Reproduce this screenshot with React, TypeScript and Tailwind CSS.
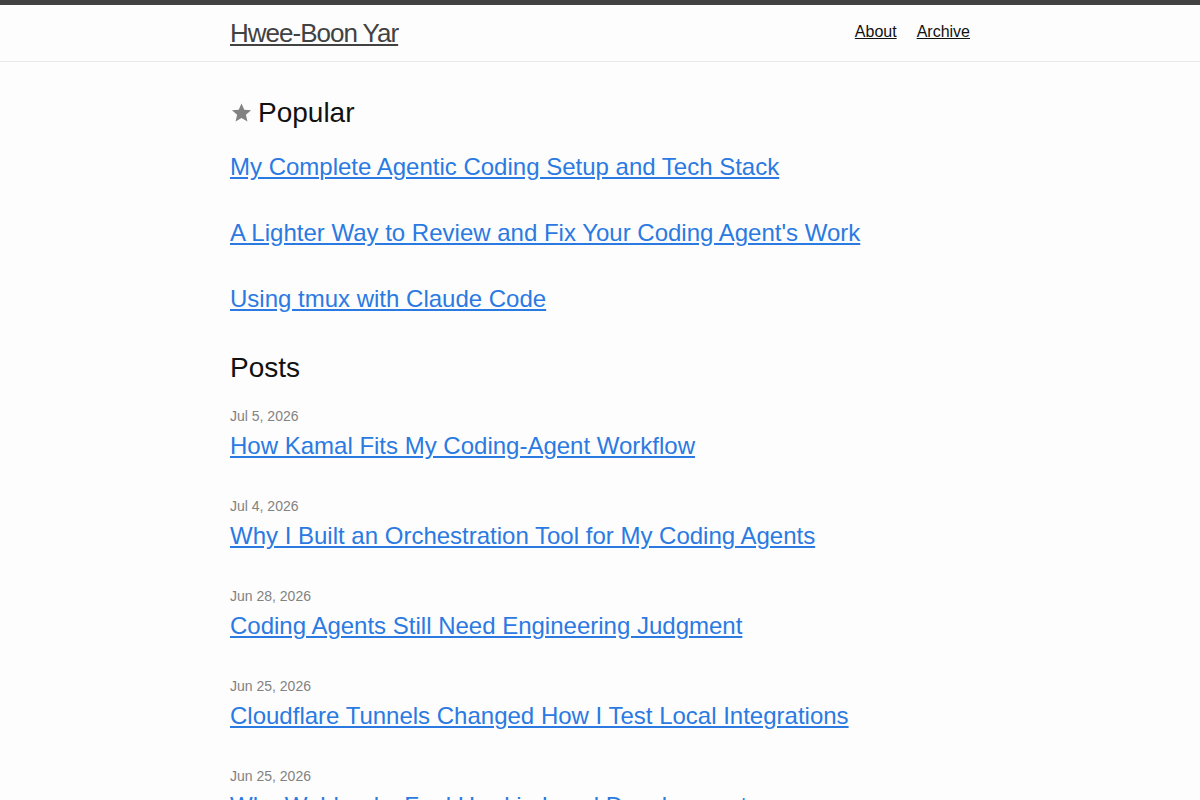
import React from "react"

const popular = [
  "My Complete Agentic Coding Setup and Tech Stack",
  "A Lighter Way to Review and Fix Your Coding Agent's Work",
  "Using tmux with Claude Code",
]

const posts = [
  { date: "Jul 5, 2026", title: "How Kamal Fits My Coding-Agent Workflow" },
  { date: "Jul 4, 2026", title: "Why I Built an Orchestration Tool for My Coding Agents" },
  { date: "Jun 28, 2026", title: "Coding Agents Still Need Engineering Judgment" },
  { date: "Jun 25, 2026", title: "Cloudflare Tunnels Changed How I Test Local Integrations" },
  { date: "Jun 25, 2026", title: "Why Webhooks Feel Hard in Local Development" },
]

function Star() {
  return (
    <svg viewBox="0 0 24 24" className="inline-block w-[23px] h-[23px] mr-[5px] align-[-2px]" fill="#828282">
      <path d="M12 2.5l2.9 6.6 7.1.6-5.4 4.7 1.6 7-6.2-3.7-6.2 3.7 1.6-7L2 9.7l7.1-.6z" />
    </svg>
  )
}

export default function App() {
  return (
    <div className="min-h-screen bg-[#fdfdfd] text-[#111] text-base leading-normal font-['Liberation_Sans',Arial,sans-serif]">
      {/* Header */}
      <header className="border-t-[5px] border-t-[#424242] border-b border-b-[#e8e8e8] min-h-[56px]">
        <div className="max-w-[800px] mx-auto px-[30px] flex items-center justify-between">
          <a href="#" className="text-[26px] leading-[56px] tracking-[-1px] font-light text-[#424242] underline">
            Hwee-Boon Yar
          </a>
          <nav className="flex gap-5 leading-[56px] -mt-[3px]">
            <a href="#" className="text-[#111] underline">About</a>
            <a href="#" className="text-[#111] underline">Archive</a>
          </nav>
        </div>
      </header>

      <main className="py-[30px]">
        <div className="max-w-[800px] mx-auto px-[30px]">
          <h2 className="text-[28px] leading-[42px] mb-[15px] font-normal">
            <Star />
            Popular
          </h2>
          <ul>
            {popular.map((t) => (
              <li key={t} className="mb-[30px]">
                <h3 className="text-2xl leading-9">
                  <a href="#" className="text-[#2a7ae2] underline">{t}</a>
                </h3>
              </li>
            ))}
          </ul>

          <h2 className="text-[28px] leading-[42px] mb-[15px] font-normal">Posts</h2>
          <ul>
            {posts.map((p) => (
              <li key={p.title} className="mb-[30px]">
                <span className="text-sm text-[#828282]">{p.date}</span>
                <h3 className="text-2xl leading-9">
                  <a href="#" className="text-[#2a7ae2] underline">{p.title}</a>
                </h3>
              </li>
            ))}
          </ul>
        </div>
      </main>
    </div>
  )
}
